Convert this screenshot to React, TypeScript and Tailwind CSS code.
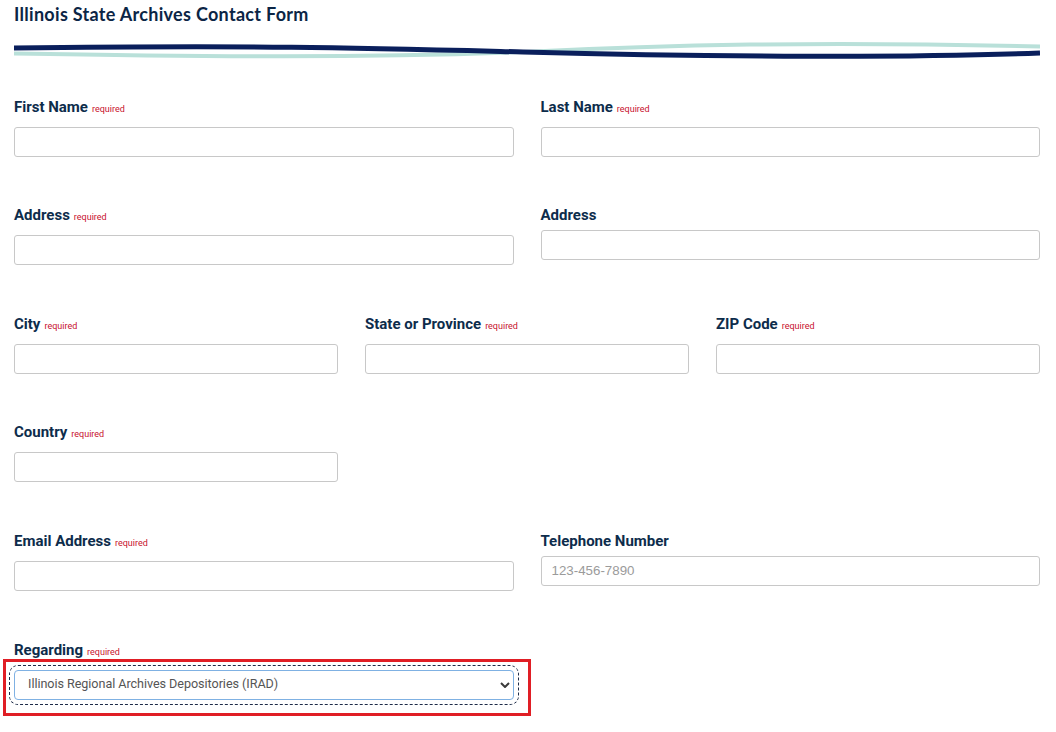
import { ReactNode } from "react";

interface FieldProps {
	label: string;
	required?: boolean;
	placeholder?: string;
	children?: ReactNode;
}

const Field = ({ label, required, placeholder, children }: FieldProps) => {
	return (
		<div className="flex flex-col">
			<label className={`block text-[15px] leading-5 font-bold text-[#0d2c4b] ${required ? "mb-[10px]" : "mb-[5px]"}`}>
				{label}
				{required && <span className="ml-[4px] text-[9px] leading-none font-normal text-[#c8102e]">required</span>}
			</label>
			{children ?? (
				<input
					type="text"
					placeholder={placeholder}
					className="h-[30px] w-full rounded-[3px] border border-[#c8c8c8] bg-white px-[10px] font-['Liberation_Sans',Arial,sans-serif] text-[13.33px] text-[#333] placeholder:text-[#9b9b9b] focus:outline-none"
				/>
			)}
		</div>
	);
};

const App = () => {
	return (
		<div className="min-h-screen bg-white pl-[14px] pr-4 font-['Roboto',sans-serif]">
			<h1 className="pt-[2px] font-['Lato',sans-serif] text-[18px] leading-6 font-bold tracking-[0.3px] text-[#0b2545]">
				Illinois State Archives Contact Form
			</h1>
			<svg className="mt-[14px] block" width="1026" height="22" viewBox="0 0 1026 22" fill="none">
				<path d="M0 13.5 C 200 17, 350 18, 509 12 C 650 5, 800 1, 1026 6.5" stroke="#b9e0d9" strokeWidth="4" />
				<path d="M0 8 C 250 5, 350 8, 509 12 C 700 17, 900 18, 1026 13" stroke="#0a1f5c" strokeWidth="5" />
			</svg>

			<form className="mt-[34.6px] flex flex-col gap-y-[48.6px]">
				<div className="grid grid-cols-2 items-start gap-x-[27px]">
					<Field label="First Name" required />
					<Field label="Last Name" required />
				</div>
				<div className="grid grid-cols-2 items-start gap-x-[27px]">
					<Field label="Address" required />
					<Field label="Address" />
				</div>
				<div className="grid grid-cols-3 items-start gap-x-[27px]">
					<Field label="City" required />
					<Field label="State or Province" required />
					<Field label="ZIP Code" required />
				</div>
				<div className="grid grid-cols-3 items-start gap-x-[27px]">
					<Field label="Country" required />
				</div>
				<div className="grid grid-cols-2 items-start gap-x-[27px]">
					<Field label="Email Address" required />
					<Field label="Telephone Number" placeholder="123-456-7890" />
				</div>
				<div className="grid grid-cols-2 items-start gap-x-[27px]">
					<Field label="Regarding" required>
						<div className="relative">
							<select
								defaultValue="irad"
								className="h-[30px] w-full appearance-none rounded-[4px] border border-[#7fb1e3] bg-white pl-[13px] pr-8 font-['Roboto',sans-serif] text-[12.6px] tracking-[-0.05px] text-[#555] outline-1 outline-offset-[4px] outline-[#1d2b48] outline-dashed"
							>
								<option value="irad">Illinois Regional Archives Depositories (IRAD)</option>
								<option value="general">General Inquiry</option>
							</select>
							<svg className="pointer-events-none absolute top-[12px] right-[4px]" width="10" height="6" viewBox="0 0 10 6" fill="none">
								<path d="M1 1 L5 5 L9 1" stroke="#3a3a3a" strokeWidth="2" />
							</svg>
							<div className="pointer-events-none absolute -top-[11px] -right-[17px] -bottom-[16px] -left-[11px] border-[3.5px] border-[#e01e25]" />
						</div>
					</Field>
				</div>
			</form>
		</div>
	);
};

export default App;
